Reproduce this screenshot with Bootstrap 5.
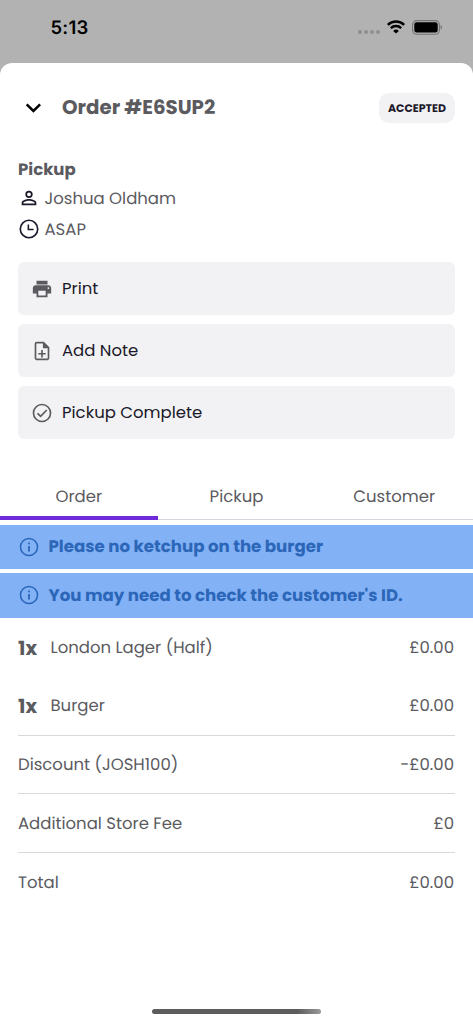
<!DOCTYPE html>
<html lang="en">
<head>
<meta charset="utf-8">
<meta name="viewport" content="width=device-width, initial-scale=1">
<title>Order #E6SUP2</title>
<link href="https://cdn.jsdelivr.net/npm/bootstrap@5.3.0/dist/css/bootstrap.min.css" rel="stylesheet">
<style>
body{font-family:Poppins,Inter,sans-serif;font-size:16.5px;line-height:24px;color:#5b5b5f;background:#b2b2b2;height:1024px;overflow:hidden;text-rendering:geometricPrecision}
svg{display:block;flex:none}
.status{height:63px;color:#000;padding:0 31px 9px 50.5px}
.clock{font-family:Inter,sans-serif;font-size:18.5px;font-weight:600;letter-spacing:.2px;padding-top:1px}
.signal{gap:2px;padding-top:10px}
.signal i{width:4px;height:4px;border-radius:50%;background:#8f8f8f}
.sheet{height:961px;background:#fff;border-radius:12px 12px 0 0}
.head{height:88px;padding:0 18px 0 21px}
.title{font-size:19.8px;font-weight:700;margin:0 auto 0 17px;line-height:24px}
.state{width:76px;height:30px;border-radius:10px;background:#f2f2f4;color:#1b1829;font-size:11px;font-weight:700;margin-top:1px}
.who{padding:7px 18px 0}
.who h2{font-size:16.5px;font-weight:700;line-height:24px;margin:0}
.who-line{height:31px;gap:4.5px;padding-top:1px}
.who-line span{padding-top:2px}
.who-line svg{color:#1b1829}
.actions{padding:18px 18px 0;gap:9px}
.action{height:53px;border:0;border-radius:6px;background:#f2f2f4;padding:0 13px;gap:9px;color:#1b1829;font-size:16.5px}
.action span{padding-top:1px}
.action svg{color:#5b5b5f}
.tabs{height:48px;margin-top:33px;border-bottom:1.5px solid #d6d5dd}
.tabs a{flex:1 1 0;color:#5b5b5f;text-decoration:none;text-align:center;padding-top:12.6px;height:47px}
.tabs a.current{border-bottom:4px solid #6f2bd9;height:48px}
.notes{padding-top:4.6px;gap:4px}
.note{height:44.5px;background:#82b1f5;color:#2b66b8;font-size:16.6px;font-weight:700;padding:0 18px;gap:8.5px}
.note span{padding-top:1px}
.lines{padding:0 18px}
.entry{height:58.6px;padding-top:1.5px}
.ruled{border-top:1.5px solid #d9d8df}
.qty{font-size:19.7px;font-weight:700;width:32.5px}
.price{margin-left:auto;padding-right:1px}
.homebar{width:169px;height:5.5px;border-radius:3px;background:linear-gradient(90deg,#5c5c5c 0 86%,#9a9a9a);margin:98px auto 0}
</style>
</head>
<body>
<header class="status d-flex align-items-center">
  <span class="clock me-auto">5:13</span>
  <span class="signal d-flex"><i></i><i></i><i></i><i></i></span>
  <svg style="margin-left:7px" width="18" height="14" viewBox="0 0 18 14" fill="none" stroke="#000" stroke-width="2.5"><path d="M.8 4.9a11.7 11.7 0 0 1 16.4 0M3.8 8.1a7.4 7.4 0 0 1 10.4 0"/><path d="M9 13.6 6.2 10.9a4 4 0 0 1 5.6 0Z" fill="#000" stroke="none"/></svg>
  <svg style="margin-left:7px" width="30" height="15" viewBox="0 0 30 15"><rect x=".6" y=".6" width="26.8" height="13.6" rx="4" fill="none" stroke="#747474" stroke-width="1.1"/><rect x="2.3" y="2.2" width="23.4" height="10.4" rx="2.3"/><path d="M28.6 5v4.6c1.8-.7 1.8-3.9 0-4.6Z" fill="#747474"/></svg>
</header>
<main class="sheet">
  <div class="head d-flex align-items-center">
    <svg width="24" height="24" viewBox="0 0 24 24" fill="none" stroke="#000" stroke-width="2.5"><path d="m5.7 9.3 6.7 6.6 6.7-6.6"/></svg>
    <h1 class="title">Order #E6SUP2</h1>
    <span class="state d-flex align-items-center justify-content-center">ACCEPTED</span>
  </div>
  <section class="who">
    <h2>Pickup</h2>
    <div class="who-line d-flex align-items-center"><svg width="22" height="22" viewBox="0 0 24 24" fill="currentColor"><path d="M12 5.9a2.1 2.1 0 1 1 0 4.2 2.1 2.1 0 0 1 0-4.2m0 9c2.97 0 6.1 1.46 6.1 2.1v1.1H5.9V17c0-.64 3.13-2.1 6.1-2.1M12 4a4 4 0 1 0 0 8 4 4 0 0 0 0-8m0 9c-2.67 0-8 1.34-8 4v3h16v-3c0-2.66-5.33-4-8-4"/></svg><span>Joshua Oldham</span></div>
    <div class="who-line d-flex align-items-center"><svg width="22" height="22" viewBox="0 0 24 24" fill="none" stroke="currentColor" stroke-width="1.8"><circle cx="12" cy="12" r="9.5"/><path d="M11.3 7v5.6H17" stroke-width="1.7"/></svg><span>ASAP</span></div>
  </section>
  <section class="actions d-flex flex-column">
    <button class="action d-flex align-items-center"><svg width="22" height="22" viewBox="0 0 24 24" fill="currentColor"><path d="M19 8H5c-1.66 0-3 1.34-3 3v6h4v4h12v-4h4v-6c0-1.66-1.34-3-3-3m-3 11H8v-5h8zm3-7a1 1 0 1 1 0-2 1 1 0 0 1 0 2M18 3H6v4h12z"/></svg><span>Print</span></button>
    <button class="action d-flex align-items-center"><svg width="22" height="22" viewBox="0 0 24 24" fill="currentColor"><path d="M14 2H6a2 2 0 0 0-2 2v16a2 2 0 0 0 2 2h12a2 2 0 0 0 2-2V8zM18.2 20.2H5.8V3.8H13V9h5.2zM11.1 11h1.8v3.1H16v1.8h-3.1V19h-1.8v-3.1H8v-1.8h3.1z"/></svg><span>Add Note</span></button>
    <button class="action d-flex align-items-center"><svg width="22" height="22" viewBox="0 0 24 24" fill="none" stroke="currentColor" stroke-width="1.8"><circle cx="12" cy="12" r="9.3"/><path d="m7.1 12.4 3.4 3.3 6.7-7"/></svg><span>Pickup Complete</span></button>
  </section>
  <nav class="tabs d-flex">
    <a class="current" href="#">Order</a><a href="#">Pickup</a><a href="#">Customer</a>
  </nav>
  <section class="notes d-flex flex-column">
    <div class="note d-flex align-items-center"><svg width="22" height="22" viewBox="0 0 24 24" fill="none" stroke="currentColor" stroke-width="1.7"><circle cx="12" cy="12" r="9.3"/><path d="M12 11v6M12 7v2" stroke-width="2"/></svg><span>Please no ketchup on the burger</span></div>
    <div class="note d-flex align-items-center"><svg width="22" height="22" viewBox="0 0 24 24" fill="none" stroke="currentColor" stroke-width="1.7"><circle cx="12" cy="12" r="9.3"/><path d="M12 11v6M12 7v2" stroke-width="2"/></svg><span>You may need to check the customer's ID.</span></div>
  </section>
  <section class="lines">
    <div class="entry d-flex align-items-center"><span class="qty">1x</span><span>London Lager (Half)</span><span class="price">£0.00</span></div>
    <div class="entry d-flex align-items-center"><span class="qty">1x</span><span>Burger</span><span class="price">£0.00</span></div>
    <div class="entry ruled d-flex align-items-center"><span>Discount (JOSH100)</span><span class="price">-£0.00</span></div>
    <div class="entry ruled d-flex align-items-center"><span>Additional Store Fee</span><span class="price">£0</span></div>
    <div class="entry ruled d-flex align-items-center"><span>Total</span><span class="price">£0.00</span></div>
  </section>
  <div class="homebar"></div>
</main>
<script src="https://cdn.jsdelivr.net/npm/bootstrap@5.3.0/dist/js/bootstrap.bundle.min.js"></script>
</body>
</html>
